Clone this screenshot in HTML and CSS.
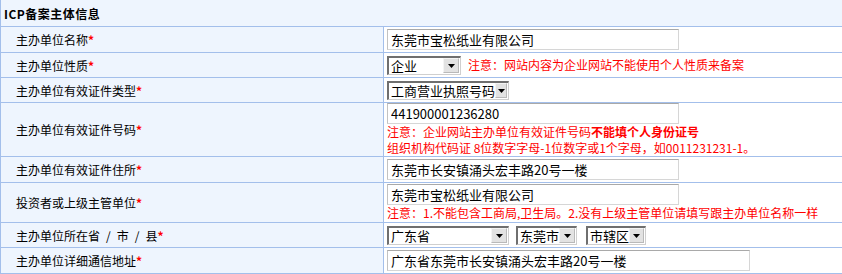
FILE: index.html
```html
<!DOCTYPE html>
<html lang="zh-CN">
<head>
<meta charset="utf-8">
<title>ICP备案主体信息</title>
<link rel="stylesheet" href="styles.css">
</head>
<body>
<div class="form">
  <div class="head">ICP备案主体信息</div>

  <div class="row h25">
    <div class="label">主办单位名称<span class="req">*</span></div>
    <div class="value"><input class="txt" type="text" value="东莞市宝松纸业有限公司"></div>
  </div>

  <div class="row h24">
    <div class="label">主办单位性质<span class="req">*</span></div>
    <div class="value inline">
      <span class="sel w74"><span class="sel-text">企业</span><span class="sel-btn"><svg width="7" height="4" viewBox="0 0 7 4"><path d="M0 0h7L3.5 4z" fill="#000"/></svg></span></span>
      <span class="note">注意：网站内容为企业网站不能使用个人性质来备案</span>
    </div>
  </div>

  <div class="row h24">
    <div class="label">主办单位有效证件类型<span class="req">*</span></div>
    <div class="value inline">
      <span class="sel w122"><span class="sel-text">工商营业执照号码</span><span class="sel-btn"><svg width="7" height="4" viewBox="0 0 7 4"><path d="M0 0h7L3.5 4z" fill="#000"/></svg></span></span>
    </div>
  </div>

  <div class="row h53">
    <div class="label">主办单位有效证件号码<span class="req">*</span></div>
    <div class="value stack">
      <input class="txt" type="text" value="441900001236280">
      <div class="note">注意：企业网站主办单位有效证件号码<b>不能填个人身份证号</b></div>
      <div class="note">组织机构代码证 8位数字字母-1位数字或1个字母，如0011231231-1。</div>
    </div>
  </div>

  <div class="row h25">
    <div class="label">主办单位有效证件住所<span class="req">*</span></div>
    <div class="value"><input class="txt" type="text" value="东莞市长安镇涌头宏丰路20号一楼"></div>
  </div>

  <div class="row h39">
    <div class="label">投资者或上级主管单位<span class="req">*</span></div>
    <div class="value stack">
      <input class="txt" type="text" value="东莞市宝松纸业有限公司">
      <div class="note">注意：1.不能包含工商局,卫生局。2.没有上级主管单位请填写跟主办单位名称一样</div>
    </div>
  </div>

  <div class="row h24">
    <div class="label">主办单位所在省&ensp;/&ensp;市&ensp;/&ensp;县<span class="req">*</span></div>
    <div class="value inline">
      <span class="sel w122"><span class="sel-text">广东省</span><span class="sel-btn"><svg width="7" height="4" viewBox="0 0 7 4"><path d="M0 0h7L3.5 4z" fill="#000"/></svg></span></span>
      <span class="sel w61 gap"><span class="sel-text">东莞市</span><span class="sel-btn"><svg width="7" height="4" viewBox="0 0 7 4"><path d="M0 0h7L3.5 4z" fill="#000"/></svg></span></span>
      <span class="sel w60 gap2"><span class="sel-text">市辖区</span><span class="sel-btn"><svg width="7" height="4" viewBox="0 0 7 4"><path d="M0 0h7L3.5 4z" fill="#000"/></svg></span></span>
    </div>
  </div>

  <div class="row h25">
    <div class="label">主办单位详细通信地址<span class="req">*</span></div>
    <div class="value"><input class="txt wide" type="text" value="广东省东莞市长安镇涌头宏丰路20号一楼"></div>
  </div>
</div>
</body>
</html>
```

FILE: styles.css
```css
html, body {
  margin: 0;
  padding: 0;
  background: #ffffff;
}

body {
  font-family: "Noto Sans CJK SC", "Noto Sans", sans-serif;
  font-size: 12px;
  color: #000;
}

.form {
  width: 860px;
  border-left: 1px solid #a3bfeb;
  background: #eef5fe;
}

.head {
  height: 26px;
  border-bottom: 1px solid #a3bfeb;
  display: flex;
  align-items: center;
  padding-left: 3px;
  font-weight: bold;
  font-size: 12px;
  letter-spacing: 0.5px;
}

.row {
  display: grid;
  grid-template-columns: 383px 1fr;
  border-bottom: 1px solid #a3bfeb;
}

.h24 { height: 24px; }
.h25 { height: 25px; }
.h39 { height: 39px; }
.h53 { height: 53px; }

.label {
  display: flex;
  align-items: center;
  padding-left: 15px;
  border-right: 1px solid #a3bfeb;
  white-space: nowrap;
}

.req {
  color: #ff0000;
  font-weight: bold;
}

.value {
  background: #ffffff;
  padding-left: 3px;
  display: flex;
  align-items: center;
}

.value.stack {
  flex-direction: column;
  align-items: flex-start;
  justify-content: center;
}

.txt {
  box-sizing: border-box;
  width: 292px;
  height: 21px;
  margin: 0;
  padding: 0 3px;
  font-family: "Noto Sans CJK SC", "Noto Sans", sans-serif;
  font-size: 13px;
  color: #000;
  background: #fff;
  border: 1px solid #d6d6d6;
  border-top-color: #a9a9a9;
  border-left-color: #c2c2c2;
  outline: none;
}

.txt.wide {
  width: 363px;
}

.note {
  color: #ff0000;
  font-size: 12px;
  line-height: 16px;
  white-space: nowrap;
}

.stack .note {
  height: 16px;
  overflow: hidden;
}

.note b {
  font-weight: bold;
}

.inline .note {
  margin-left: 7px;
}

.sel {
  box-sizing: border-box;
  height: 19px;
  display: inline-flex;
  align-items: center;
  justify-content: space-between;
  background: #fff;
  border-top: 2px solid #6f6f6f;
  border-left: 2px solid #6f6f6f;
  border-right: 1px solid #cfcfcf;
  border-bottom: 1px solid #cfcfcf;
  padding-right: 1px;
}

.sel-text {
  font-size: 13px;
  line-height: 16px;
  padding-left: 2px;
  white-space: nowrap;
}

.sel-btn {
  box-sizing: border-box;
  width: 16px;
  height: 15px;
  display: flex;
  align-items: center;
  justify-content: center;
  background: #e2e2e2;
  border: 1px solid #b9b9b9;
  border-top-color: #f4f4f4;
  border-left-color: #f4f4f4;
}

.w74 { width: 74px; }
.w122 { width: 122px; }
.w61 { width: 61px; }
.w60 { width: 60px; }

.gap { margin-left: 7px; }
.gap2 { margin-left: 9px; }
```
